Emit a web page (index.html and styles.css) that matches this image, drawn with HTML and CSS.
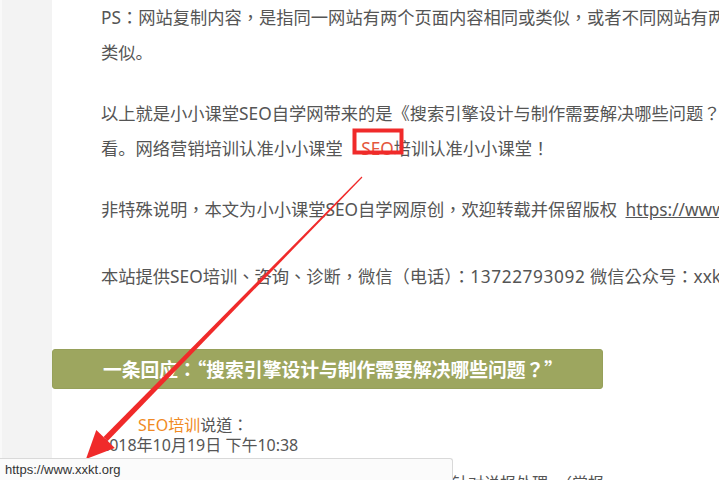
FILE: index.html
```html
<!DOCTYPE html>
<html lang="zh-CN">
<head>
<meta charset="utf-8">
<title>搜索引擎设计与制作需要解决哪些问题？</title>
<link rel="stylesheet" href="styles.css">
</head>
<body>
<div class="page" lang="zh-TW">
  <aside class="sidebar"></aside>
  <main class="content">
    <article class="entry">
      <p>PS：网站复制内容，是指同一网站有两个页面内容相同或类似，或者不同网站有两个页面内容相同或<br>类似<span class="stop" lang="zh-CN">。</span></p>
      <p>以上就是小小课堂SEO自学网带来的是《搜索引擎设计与制作需要解决哪些问题？》一文，希望能够对大家有所帮助，欢迎查<br>看<span class="stop" lang="zh-CN">。</span>网络营销培训认准小小课堂 <a class="kw" href="#">SEO</a>培训认准小小课堂！</p>
      <p class="copyright">非特殊说明，本文为小小课堂SEO自学网原创，欢迎转载并保留版权 <a class="plain" href="#">https://www.xxkt.org/</a></p>
      <p>本站提供SEO培训、咨询、诊断，微信（电话）：<span class="num">13722793092</span> 微信公众号：xxktseo</p>
    </article>
    <h3 class="comments-title">一条回应：“搜索引擎设计与制作需要解决哪些问题？”</h3>
    <div class="comment">
      <div class="author"><a class="author-name" href="#">SEO培训</a>说道：</div>
      <div class="date">2018年10月19日 下午10:38</div>
      <p class="comment-body">如果网站出现被降权的情况，需要及时排查原因并针对说报处理，（常报</p>
    </div>
  </main>
</div>
<svg class="annotation" width="719" height="480" viewBox="0 0 719 480" aria-hidden="true">
  <rect x="354.5" y="130.5" width="47" height="22" fill="none" stroke="#f02a2a" stroke-width="4"/>
  <polygon points="362.4,177.4 361.6,176.6 103.5,436.9 107.7,441.1" fill="#f02a2a"/>
  <polygon points="86,459 96.3,429.9 114.9,448.1" fill="#f02a2a"/>
</svg>
<div class="statusbar">https://www.xxkt.org</div>
</body>
</html>
```
FILE: styles.css
```css
html, body {
  margin: 0;
  padding: 0;
  width: 719px;
  height: 480px;
  overflow: hidden;
  background: #ffffff;
}

body {
  font-family: "Noto Sans", "Noto Sans CJK TC", sans-serif;
  color: #555555;
  position: relative;
}

.page {
  display: flex;
  width: 1100px;
  min-height: 480px;
}

.sidebar {
  width: 52px;
  flex: 0 0 52px;
  background: #f3f3f3;
  border-left: 2px solid #f9f9f9;
  box-sizing: border-box;
}

.content {
  flex: 1;
  padding-top: 1px;
}

.entry {
  padding-left: 49px;
  font-size: 17.28px;
  line-height: 33.5px;
}

.entry p {
  margin: 0 0 28px;
  white-space: nowrap;
}

.entry p.copyright {
  margin-bottom: 33px;
}

.stop {
  font-family: "Noto Sans CJK SC", sans-serif;
}

.num {
  letter-spacing: 0.6px;
}

.kw {
  color: #e4573d;
  text-decoration: none;
  margin-left: 14px;
}

.plain {
  color: #555555;
  text-decoration: underline;
  margin-left: 4px;
}

.comments-title {
  margin: 56px 0 0;
  width: 551px;
  height: 40px;
  box-sizing: border-box;
  padding-left: 50px;
  line-height: 38px;
  background: #9da65f;
  border: 1px solid #96a05a;
  border-radius: 3px;
  color: #ffffff;
  font-family: "Noto Sans CJK TC", sans-serif;
  font-size: 18.8px;
  font-weight: bold;
}

.comment {
  padding-left: 48px;
  padding-top: 26px;
}

.author {
  padding-left: 38px;
  font-size: 16px;
  line-height: 20px;
}

.author-name {
  color: #f08a24;
  text-decoration: none;
}

.date {
  font-size: 16px;
  line-height: 20px;
}

.comment-body {
  margin: 18px 0 0;
  font-size: 16px;
  line-height: 20px;
  white-space: nowrap;
}

.annotation {
  position: absolute;
  left: 0;
  top: 0;
  pointer-events: none;
}

.statusbar {
  position: absolute;
  left: 0;
  bottom: 0;
  width: 453px;
  height: 22px;
  box-sizing: border-box;
  padding-left: 5px;
  background: #fbfbfb;
  border-top: 1px solid #d9d9d9;
  border-right: 1px solid #d9d9d9;
  border-top-right-radius: 3px;
  font-family: "Liberation Sans", Arial, sans-serif;
  font-size: 13px;
  line-height: 21px;
  color: #333333;
}
```
